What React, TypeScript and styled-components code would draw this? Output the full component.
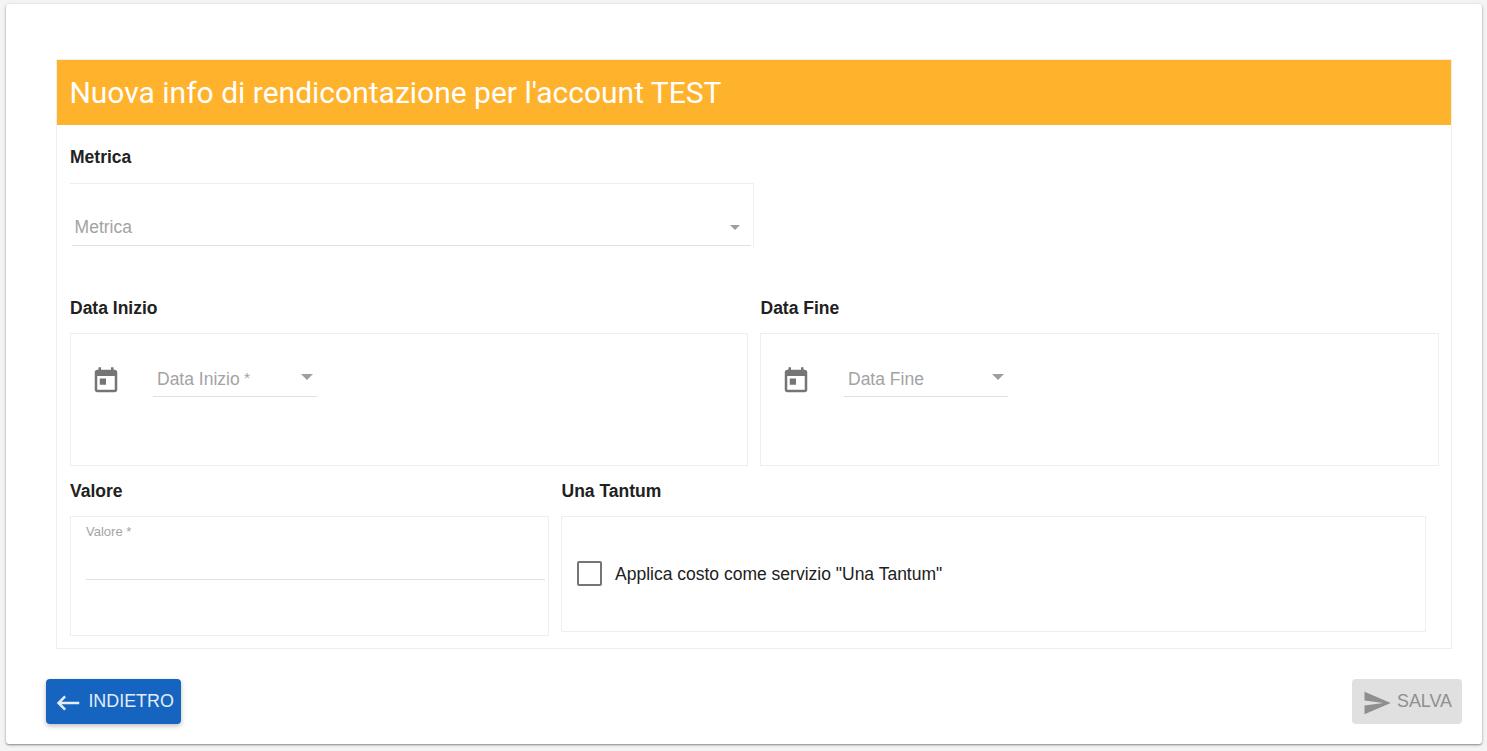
import React from 'react';
import styled, { createGlobalStyle } from 'styled-components';

const GlobalStyle = createGlobalStyle`
  *, *::before, *::after { box-sizing: border-box; }
  body {
    margin: 0;
    background: #f4f4f4;
    color: #212121;
    font-family: "Liberation Sans", Arial, sans-serif;
    font-size: 17.5px;
    overflow: hidden;
  }
`;

const Page = styled.div`
  height: 751px;
  padding: 4px 5px 7px 6px;
`;

const Card = styled.main`
  height: 740px;
  display: flex;
  flex-direction: column;
  padding: 55px 20px 20px 40px;
  background: #fff;
  border-radius: 3px;
  box-shadow: 0 1px 2px rgba(0, 0, 0, 0.38), 0 1px 4px rgba(0, 0, 0, 0.12);
`;

const Panel = styled.section`
  width: 1396px;
  height: 590px;
  margin-left: 10px;
  border: 1px solid #eee;
`;

const Title = styled.h1`
  margin: 0;
  height: 65px;
  padding-left: 12.4px;
  background: #ffb22b;
  color: #fff;
  font: 400 30px/65px Roboto, sans-serif;
`;

const Row = styled.div<{ $height: number }>`
  display: flex;
  align-items: flex-start;
  gap: 12px;
  height: ${(p) => p.$height}px;
  padding-left: 13px;
`;

const Group = styled.div<{ $width: number }>`
  width: ${(p) => p.$width}px;
  padding-top: 21px;
`;

const Label = styled.h2<{ $gap?: number; $indent?: number }>`
  margin: 0 0 ${(p) => p.$gap ?? 14}px;
  padding-left: ${(p) => p.$indent ?? 0}px;
  font-size: 17.5px;
  line-height: 22px;
  font-weight: 700;
`;

const Box = styled.div<{ $height: number }>`
  height: ${(p) => p.$height}px;
  border: 1px solid #eee;
`;

const MetricBox = styled.div`
  height: 65px;
  padding: 25px 2px 0;
  border-top: 1px solid #eee;
  border-right: 1px solid #eee;
`;

const Select = styled.div<{ $width?: string; $inset: string; $line: number }>`
  display: flex;
  justify-content: space-between;
  width: ${(p) => p.$width ?? 'auto'};
  height: 37px;
  padding: ${(p) => p.$inset};
  border-bottom: 1px solid #e0e0e0;
  color: #a3a3a3;
  line-height: ${(p) => p.$line}px;
`;

const Arrow = styled.span<{ $size: number; $top: number }>`
  width: 0;
  height: 0;
  margin-top: ${(p) => p.$top}px;
  border: ${(p) => p.$size}px solid transparent;
  border-top-color: #9e9e9e;
  border-bottom: 0;
`;

const Star = styled.span`
  font-size: 15.5px;
  line-height: 1;
  vertical-align: 2px;
`;

const DateBox = styled(Box)`
  display: flex;
  padding-top: 26px;
`;

const CalendarSlot = styled.span<{ $width: number }>`
  width: ${(p) => p.$width}px;
  height: 36px;
  padding: 6px 0 0 20px;
  color: #757575;
`;

const Glyph = styled.svg`
  display: block;
  flex: none;
  width: 30px;
  height: 30px;
  fill: currentColor;
`;

const ValueBox = styled(Box)`
  padding: 6px 3px 0 15px;
`;

const ValueField = styled.div`
  height: 57px;
  border-bottom: 1px solid #e0e0e0;
  color: #a3a3a3;
  font-size: 13px;
  line-height: 17px;
`;

const CheckBoxRow = styled(Box)`
  display: flex;
  align-items: center;
  gap: 13px;
  padding-left: 15px;
`;

const Check = styled.span`
  width: 25px;
  height: 25px;
  margin-bottom: 1px;
  border: 2px solid #757575;
  border-radius: 2px;
`;

const Actions = styled.footer`
  display: flex;
  justify-content: space-between;
  margin-top: 30px;
`;

const Button = styled.button<{ $primary?: boolean }>`
  display: flex;
  align-items: center;
  width: ${(p) => (p.$primary ? 135 : 110)}px;
  height: 45px;
  padding: ${(p) => (p.$primary ? '0 0 0 7.4px' : '0 0 0 10px')};
  gap: 5px;
  border: 0;
  border-radius: 4px;
  background: ${(p) => (p.$primary ? '#1565c0' : '#e0e0e0')};
  color: ${(p) => (p.$primary ? '#e3ecf7' : '#8f8f8f')};
  box-shadow: ${(p) => (p.$primary ? '0 2px 5px rgba(0, 0, 0, 0.26)' : 'none')};
  font: 400 17.9px "Liberation Sans", Arial, sans-serif;
  white-space: nowrap;

  ${Glyph} { margin-top: 3px; }
`;

const TodayIcon = () => (
  <Glyph viewBox="0 0 24 24">
    <path d="M19 3h-1V1h-2v2H8V1H6v2H5c-1.11 0-1.99.9-1.99 2L3 19c0 1.1.89 2 2 2h14c1.1 0 2-.9 2-2V5c0-1.1-.9-2-2-2zm0 16H5V8h14v11zM7 10h5v5H7z" />
  </Glyph>
);

interface DateFieldProps {
  label: string;
  slot: number;
  required?: boolean;
}

const DateField = ({ label, slot, required }: DateFieldProps) => (
  <DateBox $height={133}>
    <CalendarSlot $width={slot}><TodayIcon /></CalendarSlot>
    <Select $width="164px" $inset="0 4px" $line={38}>
      <span>{label}{required && <Star> *</Star>}</span>
      <Arrow $size={6} $top={14} />
    </Select>
  </DateBox>
);

export default function App() {
  return (
    <Page>
      <GlobalStyle />
      <Card>
        <Panel>
          <Title>Nuova info di rendicontazione per l'account TEST</Title>
          <Row $height={151}>
            <Group $width={684}>
              <Label $gap={15}>Metrica</Label>
              <MetricBox>
                <Select $inset="0 11px 0 2.6px" $line={36}>
                  <span>Metrica</span>
                  <Arrow $size={5} $top={16} />
                </Select>
              </MetricBox>
            </Group>
          </Row>
          <Row $height={183}>
            <Group $width={678}>
              <Label>Data Inizio</Label>
              <DateField label="Data Inizio" slot={82} required />
            </Group>
            <Group $width={679}>
              <Label $indent={0.5}>Data Fine</Label>
              <DateField label="Data Fine" slot={83} />
            </Group>
          </Row>
          <Row $height={170}>
            <Group $width={479}>
              <Label>Valore</Label>
              <ValueBox $height={120}>
                <ValueField>Valore *</ValueField>
              </ValueBox>
            </Group>
            <Group $width={865}>
              <Label $indent={0.5}>Una Tantum</Label>
              <CheckBoxRow $height={116}>
                <Check />
                <span>Applica costo come servizio "Una Tantum"</span>
              </CheckBoxRow>
            </Group>
          </Row>
        </Panel>
        <Actions>
          <Button $primary>
            <Glyph viewBox="0 0 24 24">
              <path d="M21 11H6.83l3.58-3.59L9 6l-6 6 6 6 1.41-1.41L6.83 13H21z" />
            </Glyph>
            INDIETRO
          </Button>
          <Button disabled>
            <Glyph viewBox="0 0 24 24">
              <path d="M2.01 21L23 12 2.01 3 2 10l15 2-15 2z" />
            </Glyph>
            SALVA
          </Button>
        </Actions>
      </Card>
    </Page>
  );
}
